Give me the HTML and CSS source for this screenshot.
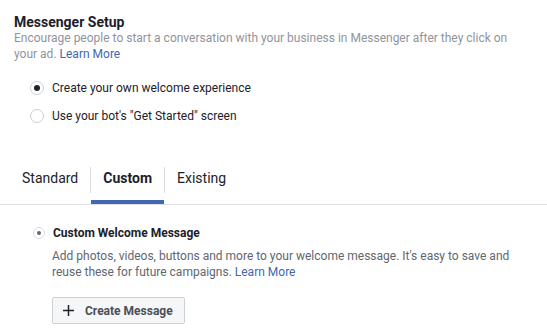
FILE: index.html
```html
<!DOCTYPE html>
<html>
<head>
<meta charset="utf-8">
<link rel="stylesheet" href="styles.css">
</head>
<body>
<div class="page">
  <section class="setup">
    <h1 class="title">Messenger Setup</h1>
    <p class="subtitle">Encourage people to start a conversation with your business in Messenger after they click on your ad. <a class="link" href="#">Learn More</a></p>
    <div class="options">
      <label class="option"><span class="radio checked"></span><span>Create your own welcome experience</span></label>
      <label class="option"><span class="radio"></span><span>Use your bot's "Get Started" screen</span></label>
    </div>
  </section>
  <nav class="tabs">
    <div class="tab">Standard</div>
    <div class="sep"></div>
    <div class="tab active">Custom</div>
    <div class="sep"></div>
    <div class="tab">Existing</div>
  </nav>
  <section class="custom">
    <div class="custom-head"><span class="radio small checked"></span><span class="custom-title">Custom Welcome Message</span></div>
    <p class="desc">Add photos, videos, buttons and more to your welcome message. It's easy to save and reuse these for future campaigns. <a class="link" href="#">Learn More</a></p>
    <button class="btn"><svg class="plus" width="11" height="11" viewBox="0 0 11 11"><path d="M5.5 0v11M0 5.5h11" stroke="#1d2129" stroke-width="1.5"/></svg><span>Create Message</span></button>
  </section>
</div>
</body>
</html>
```
FILE: styles.css
```css
* { box-sizing: border-box; }
body {
  margin: 0;
  background: #fff;
  font-family: Roboto, "Liberation Sans", Arial, sans-serif;
  color: #1d2129;
}
.page { width: 547px; }
.setup { padding: 14px 16px 0 14px; }
.title {
  margin: 0;
  font-size: 14px;
  line-height: 16px;
  font-weight: 700;
  color: #1d2129;
}
.subtitle {
  margin: 0;
  font-size: 12px;
  line-height: 16px;
  color: #90949c;
}
.link { color: #4267b2; text-decoration: none; }
.options {
  display: flex;
  flex-direction: column;
  gap: 12px;
  padding: 18px 0 0 16px;
}
.option {
  display: flex;
  align-items: center;
  gap: 8px;
  font-size: 12px;
  line-height: 16px;
  color: #1d2129;
}
.radio {
  width: 14px;
  height: 14px;
  border-radius: 50%;
  border: 1px solid #ccd0d5;
  background: #fff;
  display: flex;
  align-items: center;
  justify-content: center;
  flex: none;
}
.radio.checked::after {
  content: "";
  width: 6px;
  height: 6px;
  border-radius: 50%;
  background: #1d2129;
}
.radio.small { width: 12px; height: 12px; border-color: #dadde1; }
.radio.small.checked::after { width: 4px; height: 4px; background: #606770; }
.tabs {
  display: flex;
  align-items: flex-start;
  margin-top: 43px;
  padding-left: 10px;
  border-bottom: 1px solid #dddfe2;
}
.tab {
  height: 37px;
  padding: 0 12px;
  line-height: 23px;
  font-size: 14px;
  color: #1d2129;
  border-bottom: 4px solid transparent;
}
.tab.active { font-weight: 700; border-bottom-color: #4267b2; }
.sep { width: 1px; height: 26px; background: #dadde1; }
.custom { padding: 20px 16px 0 33px; }
.custom-head {
  display: flex;
  align-items: center;
  gap: 8px;
  font-size: 12px;
  line-height: 16px;
}
.custom-title { font-weight: 700; color: #1d2129; }
.desc {
  margin: 7px 0 0 19px;
  font-size: 12px;
  line-height: 16px;
  color: #606770;
}
.btn {
  margin: 17px 0 0 19px;
  height: 27px;
  padding: 0 11px 0 10px;
  display: flex;
  align-items: center;
  gap: 11px;
  background: #f5f6f7;
  border: 1px solid #ccd0d5;
  border-radius: 2px;
  font-family: Roboto, "Liberation Sans", Arial, sans-serif;
  font-size: 12px;
  line-height: 16px;
  font-weight: 700;
  color: #4b4f56;
}
.plus { flex: none; }
```
